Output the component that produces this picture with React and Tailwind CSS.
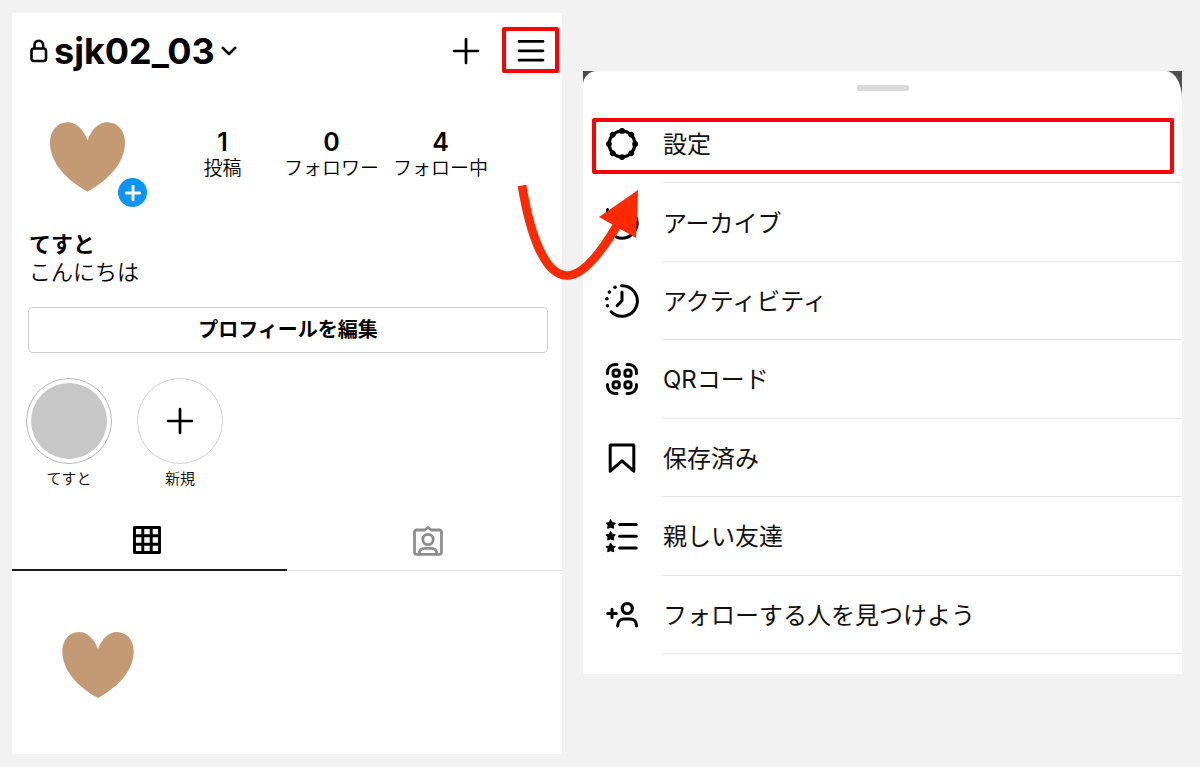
import React from "react";
import { clsx } from "clsx";

const Heart = ({ className }) => (
  <svg viewBox="0 0 226 209" className={className} fill="#c49a74" aria-hidden="true">
    <path d="M113 54C101 22 79 0 53 0C21 0 0 27 0 61C0 120 46 172 113 209C180 172 226 120 226 61C226 27 205 0 173 0C147 0 125 22 113 54Z" />
  </svg>
);

const PlusIcon = ({ className }) => (
  <svg viewBox="0 0 28 28" className={className} stroke="currentColor" strokeWidth="2.7" strokeLinecap="round" aria-hidden="true">
    <path d="M14 2v24M2 14h24" />
  </svg>
);

const MenuIcon = ({ children }) => (
  <svg
    viewBox="0 0 36 36"
    className="h-9 w-9 shrink-0"
    fill="none"
    stroke="currentColor"
    strokeWidth="3"
    strokeLinecap="round"
    strokeLinejoin="round"
    aria-hidden="true"
  >
    {children}
  </svg>
);

const STAR = "M0-4.4L1.8-1.6L4.6-1.2L2.7 1L3 4L0 3L-3 4L-2.7 1L-4.6-1.2L-1.8-1.6Z";

const SettingsIcon = () => (
  <MenuIcon>
    <circle cx="18" cy="18" r="12.8" strokeWidth="3.3" />
    {[0, 45, 90, 135, 180, 225, 270, 315].map((deg) => (
      <circle key={deg} cx="18" cy="4.9" r="2.9" fill="currentColor" stroke="none" transform={`rotate(${deg} 18 18)`} />
    ))}
  </MenuIcon>
);

const ArchiveIcon = () => (
  <MenuIcon>
    <path d="M5 11A15 15 0 1 1 12 31.8" />
    <path d="M3.6 4.5V11.5H10.5" />
    <path d="M18 10v8l5 4" />
  </MenuIcon>
);

const ActivityIcon = () => (
  <MenuIcon>
    <path d="M17.5 2.7A15.3 15.3 0 1 1 7.2 28.8" />
    <path d="M18 9v8.8l-4.8 4.8" />
    <g fill="currentColor" stroke="none">
      <circle cx="11" cy="4.2" r="1.8" />
      <circle cx="5.4" cy="9.1" r="1.8" />
      <circle cx="2.9" cy="15.8" r="1.8" />
      <circle cx="3.4" cy="22.8" r="1.8" />
    </g>
  </MenuIcon>
);

const QrIcon = () => (
  <MenuIcon>
    <path d="M3.5 12.5V11A7.5 7.5 0 0 1 11 3.5H13M23 3.5H25A7.5 7.5 0 0 1 32.5 11V12.5M32.5 23.5V25A7.5 7.5 0 0 1 25 32.5H23M13 32.5H11A7.5 7.5 0 0 1 3.5 25V23.5" />
    <rect x="9.1" y="9.1" width="6.2" height="6.2" rx="2.4" />
    <rect x="20.9" y="9.1" width="6.2" height="6.2" rx="2.4" />
    <rect x="9.1" y="20.7" width="6.2" height="6.2" rx="2.4" />
    <rect x="20.9" y="20.7" width="6.2" height="6.2" rx="2.4" />
  </MenuIcon>
);

const SavedIcon = () => (
  <MenuIcon>
    <path d="M6.2 5H29.8V31.2L18 20.8L6.2 31.2Z" />
  </MenuIcon>
);

const FriendsIcon = () => (
  <MenuIcon>
    {[6.3, 18, 29.7].map((y) => (
      <g key={y} transform={`translate(6.7 ${y})`}>
        <path d={STAR} fill="currentColor" strokeWidth="1" />
        <path d="M9 .2H25.5" />
      </g>
    ))}
  </MenuIcon>
);

const DiscoverIcon = () => (
  <MenuIcon>
    <path d="M3.7 16.5H12.3M8 12.2V20.8" />
    <circle cx="23.3" cy="11.5" r="5" strokeWidth="3.2" />
    <path strokeWidth="3.2" d="M13.7 28.8C13.7 24.5 16.5 22 20 22H26.3C30 22 32.5 24.5 32.5 28.8" />
  </MenuIcon>
);

const stats = [
  { value: 1, label: "投稿" },
  { value: 0, label: "フォロワー" },
  { value: 4, label: "フォロー中" },
];

const menuItems = [
  { label: "設定", icon: SettingsIcon, highlighted: true },
  { label: "アーカイブ", icon: ArchiveIcon },
  { label: "アクティビティ", icon: ActivityIcon },
  { label: "QRコード", icon: QrIcon },
  { label: "保存済み", icon: SavedIcon },
  { label: "親しい友達", icon: FriendsIcon },
  { label: "フォローする人を見つけよう", icon: DiscoverIcon },
];

const ProfileHeader = () => (
  <header className="flex items-center pt-[14px] pr-[3px] pl-[18px]">
    <button className="flex items-center pt-[2px]">
      <svg viewBox="0 0 18 24" className="mr-[6px] h-6 w-[18px]" fill="none" stroke="currentColor" strokeWidth="2.6" aria-hidden="true">
        <rect x="1.5" y="9.5" width="14.5" height="12.5" rx="2.5" />
        <path d="M4.5 9.5V6a4.3 4.3 0 0 1 8.6 0V9.5" />
      </svg>
      <h1 className="text-[36px] leading-[44px] font-bold">sjk02_03</h1>
      <svg viewBox="0 0 16 10" className="ml-[6px] h-[10px] w-4" fill="none" stroke="currentColor" strokeWidth="2.6" strokeLinecap="round" strokeLinejoin="round" aria-hidden="true">
        <path d="M1.8 1.8L8 8L14.2 1.8" />
      </svg>
    </button>
    <button aria-label="作成" className="ml-auto pt-[2px]">
      <PlusIcon className="h-7 w-7" />
    </button>
    <button
      aria-label="メニュー"
      className="ml-[22px] flex h-[46px] w-[57px] items-center justify-center rounded-[2px] border-4 border-[#fb0007]"
    >
      <svg viewBox="0 0 28 24" className="h-6 w-7" stroke="currentColor" strokeWidth="2.7" strokeLinecap="round" aria-hidden="true">
        <path d="M2 3.4h24M2 12.8h24M2 22.2h24" />
      </svg>
    </button>
  </header>
);

const ProfileSummary = () => (
  <>
    <div className="mt-[49px] flex pl-[38px]">
      <div className="relative h-[85px] w-[97px] shrink-0">
        <Heart className="h-[70px] w-[75px]" />
        <button
          aria-label="ストーリーズに追加"
          className="absolute right-0 bottom-0 flex h-[29px] w-[29px] items-center justify-center rounded-full bg-[#0c95f6] text-white"
        >
          <PlusIcon className="h-4 w-4 stroke-5" />
        </button>
      </div>
      <dl className="mr-[67px] ml-[21px] grid flex-1 grid-cols-3 pt-[6px] text-center">
        {stats.map((s) => (
          <div key={s.label} className="flex flex-col-reverse justify-end">
            <dt className="text-[19px] leading-[26px] font-[350] whitespace-nowrap">{s.label}</dt>
            <dd className="text-[25px] leading-[28px] font-semibold">{s.value}</dd>
          </div>
        ))}
      </dl>
    </div>
    <div className="mt-[23px] pl-[17px] text-[22px] leading-[28px]">
      <p className="font-bold">てすと</p>
      <p className="font-[350]">こんにちは</p>
    </div>
    <div className="mt-[21px] pr-[14px] pl-4">
      <button className="h-[46px] w-full rounded-[5px] border border-[#cdcdcd] text-[20px] font-bold">
        プロフィールを編集
      </button>
    </div>
  </>
);

const Highlights = () => (
  <div className="mt-[25px] flex gap-[25px] pl-[14px] text-center text-[15px] leading-[20px] font-[350]">
    <button className="flex flex-col items-center gap-[5px]">
      <span className="flex h-[86px] w-[86px] items-center justify-center rounded-full border border-[#b9b9b9]">
        <span className="h-[76px] w-[76px] rounded-full bg-[#c7c7c7]" />
      </span>
      てすと
    </button>
    <button className="flex flex-col items-center gap-[5px]">
      <span className="flex h-[86px] w-[86px] items-center justify-center rounded-full border border-[#d2d2d2]">
        <PlusIcon className="h-7 w-7" />
      </span>
      新規
    </button>
  </div>
);

const Tabs = () => (
  <div role="tablist" className="mt-[22px] grid grid-cols-2">
    <button
      role="tab"
      aria-selected="true"
      aria-label="投稿"
      className="flex h-[60px] items-center justify-center border-b-2 border-[#1a1a1a] pr-[5px]"
    >
      <svg viewBox="0 0 28 28" className="h-7 w-7" fill="none" stroke="currentColor" strokeWidth="2.9" strokeLinejoin="round" aria-hidden="true">
        <path d="M1.5 1.5H26.5V26.5H1.5ZM9.8 1.5V26.5M18.2 1.5V26.5M1.5 9.8H26.5M1.5 18.2H26.5" />
      </svg>
    </button>
    <button
      role="tab"
      aria-selected="false"
      aria-label="タグ付け"
      className="flex h-[60px] items-center justify-center border-b border-[#e3e3e3] pl-[7px] text-[#8e8e8e]"
    >
      <svg viewBox="0 0 30 30" className="h-[30px] w-[30px]" fill="none" stroke="currentColor" strokeWidth="2.8" strokeLinecap="round" strokeLinejoin="round" aria-hidden="true">
        <path d="M3.5 4H11.8L15 1.5L18.2 4H26.5A2.1 2.1 0 0 1 28.5 6.2V26.2A2.1 2.1 0 0 1 26.5 28.4H3.5A2.1 2.1 0 0 1 1.5 26.2V6.2A2.1 2.1 0 0 1 3.5 4Z" />
        <circle cx="15" cy="13.5" r="5.2" />
        <path d="M6 28C6 24 8.5 22.3 12 22.3H18C21.5 22.3 24 24 24 28" />
      </svg>
    </button>
  </div>
);

const MenuRow = ({ label, icon: Icon, highlighted }) => (
  <li className="relative">
    <button className="flex h-full w-full items-center gap-[23px] pl-[21px] text-left">
      <Icon />
      <span
        className={clsx(
          "flex flex-1 items-center self-stretch border-b border-[#e4e4e4] pt-[3px]",
          "text-[24px] leading-[32px] font-[390] text-[#111]"
        )}
      >
        {label}
      </span>
    </button>
    {highlighted && (
      <span className="pointer-events-none absolute top-[13px] right-2 bottom-[9px] left-[9px] rounded-[2px] border-4 border-[#fb0007]" />
    )}
  </li>
);

// Points from the hamburger button to the first row of the sheet
const GuideArrow = () => (
  <svg
    viewBox="516 184 124 98"
    className="pointer-events-none absolute top-[113px] left-[-67px] h-[98px] w-[124px]"
    aria-hidden="true"
  >
    <path d="M522 185.5C530 235 545 275.5 567 275.5C582 275.5 600 255 619 222" fill="none" stroke="#ff2a00" strokeWidth="8.7" />
    <path d="M638 190L599 217L636 238Z" fill="#ff2a00" />
  </svg>
);

export default function App() {
  return (
    <main className="grid min-h-screen grid-cols-[550fr_599fr] items-start gap-[21px] bg-[#f2f2f2] pt-[13px] pr-[18px] pb-[13px] pl-3 font-['Inter','Noto_Sans_CJK_JP',sans-serif] text-black">
      <section className="bg-white">
        <ProfileHeader />
        <ProfileSummary />
        <Highlights />
        <Tabs />
        <div className="pt-[61px] pb-14 pl-[50px]">
          <Heart className="h-[66px] w-[72px]" />
        </div>
      </section>

      <section className="relative mt-[58px] bg-[#4d4d4d]">
        <div className="rounded-tl-[14px] rounded-tr-[16px_28px] bg-white pt-[14px] pb-5">
          <div className="mx-auto h-[6px] w-[52px] rounded-full bg-[#dadada]" />
          <ul className="mt-[14px] grid min-h-[549px] auto-rows-fr">
            {menuItems.map((item) => (
              <MenuRow key={item.label} {...item} />
            ))}
          </ul>
        </div>
        <GuideArrow />
      </section>
    </main>
  );
}
